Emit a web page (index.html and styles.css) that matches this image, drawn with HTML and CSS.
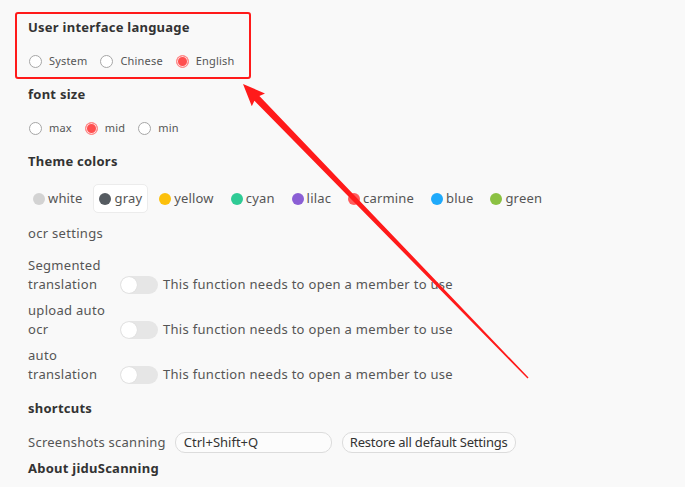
FILE: index.html
```html
<!DOCTYPE html>
<html lang="en">
<head>
<meta charset="utf-8">
<title>Settings</title>
<link rel="stylesheet" href="styles.css">
</head>
<body>
<div class="page">
  <div class="title t-first">User interface language</div>
  <div class="radios">
    <label class="radio"><span class="circle"></span><span>System</span></label>
    <label class="radio"><span class="circle"></span><span>Chinese</span></label>
    <label class="radio"><span class="circle on"></span><span>English</span></label>
  </div>

  <div class="title">font size</div>
  <div class="radios">
    <label class="radio"><span class="circle"></span><span>max</span></label>
    <label class="radio"><span class="circle on"></span><span>mid</span></label>
    <label class="radio"><span class="circle"></span><span>min</span></label>
  </div>

  <div class="title">Theme colors</div>
  <div class="swatches">
    <div class="swatch"><span class="dot c-white"></span>white</div>
    <div class="swatch active"><span class="dot c-gray"></span>gray</div>
    <div class="swatch"><span class="dot c-yellow"></span>yellow</div>
    <div class="swatch"><span class="dot c-cyan"></span>cyan</div>
    <div class="swatch"><span class="dot c-lilac"></span>lilac</div>
    <div class="swatch"><span class="dot c-carmine"></span>carmine</div>
    <div class="swatch"><span class="dot c-blue"></span>blue</div>
    <div class="swatch"><span class="dot c-green"></span>green</div>
  </div>

  <div class="subtitle">ocr settings</div>
  <div class="switch-list">
    <div class="switch-row">
      <div class="switch-label">Segmented translation</div>
      <span class="toggle"><span class="knob"></span></span>
      <span class="switch-text">This function needs to open a member to use</span>
    </div>
    <div class="switch-row">
      <div class="switch-label">upload auto ocr</div>
      <span class="toggle"><span class="knob"></span></span>
      <span class="switch-text">This function needs to open a member to use</span>
    </div>
    <div class="switch-row">
      <div class="switch-label">auto translation</div>
      <span class="toggle"><span class="knob"></span></span>
      <span class="switch-text">This function needs to open a member to use</span>
    </div>
  </div>

  <div class="title t-short">shortcuts</div>
  <div class="shortcut-row">
    <span class="shortcut-label">Screenshots scanning</span>
    <span class="key-input">Ctrl+Shift+Q</span>
    <span class="btn">Restore all default Settings</span>
  </div>
  <div class="title t-about">About jiduScanning</div>
</div>

<svg class="annot" width="685" height="487" viewBox="0 0 685 487" xmlns="http://www.w3.org/2000/svg">
  <rect x="16" y="13" width="234" height="65" rx="2" fill="none" stroke="#ff1a1a" stroke-width="2"/>
  <polygon fill="#ff1a1a" points="243,84 265,93.5 259.4,96 528.5,377.5 527.5,378.5 254.4,100.8 251.8,106.3"/>
</svg>
</body>
</html>
```

FILE: styles.css
```css
* { box-sizing: border-box; }

html, body {
  margin: 0;
  padding: 0;
  background: #f9f9f9;
}

body {
  font-family: "Noto Sans", "Open Sans", sans-serif;
  font-size: 13px;
  letter-spacing: 0.3px;
  color: #555;
  width: 685px;
  height: 487px;
  overflow: hidden;
  position: relative;
}

.page {
  padding: 17px 0 0 28px;
  display: flex;
  flex-direction: column;
  align-items: flex-start;
}

.title {
  font-weight: bold;
  color: #333;
  line-height: 20px;
  font-size: 13px;
  letter-spacing: 0.25px;
  margin-top: 13px;
}
.t-first { margin-top: 0; }
.t-short { margin-top: 14px; }
.t-about { margin-top: 5px; }

.radios {
  display: flex;
  gap: 12px;
  margin-top: 14px;
  height: 20px;
  align-items: center;
}

.radio {
  display: flex;
  align-items: center;
  gap: 7px;
  font-size: 11px;
  letter-spacing: 0.18px;
  color: #555;
  line-height: 20px;
}

.circle {
  width: 13px;
  height: 13px;
  margin-left: 1px;
  border-radius: 50%;
  border: 1px solid #a6a6a6;
  background: #fff;
  flex: none;
}
.circle.on {
  border: 1px solid #ff8a8a;
  background: #ff4f4f;
  box-shadow: inset 0 0 0 1px #ffd6d6;
}

.swatches {
  display: flex;
  gap: 5px;
  margin-top: 13px;
  margin-left: -1px;
  letter-spacing: 0.17px;
}

.swatch {
  display: flex;
  align-items: center;
  gap: 3px;
  padding: 4px 5px 4px 5px;
  border: 1px solid transparent;
  border-radius: 5px;
  line-height: 19px;
  color: #555;
}
.swatch.active {
  background: #fff;
  border-color: #ececec;
}

.dot {
  width: 12px;
  height: 12px;
  border-radius: 50%;
  flex: none;
}
.c-white { background: #d3d3d3; }
.c-gray { background: #555b61; }
.c-yellow { background: #fcc00b; }
.c-cyan { background: #2fcb95; }
.c-lilac { background: #8b5fd5; }
.c-carmine { background: #ff5c5c; }
.c-blue { background: #1faafb; }
.c-green { background: #8bc142; }

.subtitle {
  line-height: 20px;
  margin-top: 10px;
  color: #555;
}

.switch-list {
  display: flex;
  flex-direction: column;
  gap: 7px;
  margin-top: 13px;
}

.switch-row {
  display: flex;
  align-items: flex-end;
}

.switch-label {
  width: 88px;
  line-height: 19px;
  color: #555;
}

.toggle {
  width: 38px;
  height: 18px;
  margin: 0 5px 0 4px;
  border-radius: 9px;
  background: #e6e6e6;
  display: flex;
  align-items: center;
  padding: 1px;
  flex: none;
}
.knob {
  width: 16px;
  height: 16px;
  border-radius: 50%;
  background: #fff;
  box-shadow: 0 0 1px rgba(0,0,0,0.15);
}

.switch-text {
  line-height: 19px;
  color: #555;
}

.shortcut-row {
  display: flex;
  align-items: center;
  margin-top: 14px;
  height: 21px;
}

.shortcut-label {
  color: #555;
  line-height: 21px;
  letter-spacing: 0.25px;
}

.key-input {
  width: 157px;
  height: 21px;
  margin-left: 9px;
  border: 1px solid #dcdcdc;
  border-radius: 10px;
  padding: 0 8px;
  line-height: 19px;
  letter-spacing: 0;
  color: #333;
  background: #fcfcfc;
}

.btn {
  height: 21px;
  margin-left: 10px;
  border: 1px solid #dcdcdc;
  border-radius: 10px;
  padding: 0 7px;
  line-height: 19px;
  letter-spacing: -0.2px;
  color: #333;
  background: #fcfcfc;
}

.annot {
  position: absolute;
  left: 0;
  top: 0;
  pointer-events: none;
}
```
